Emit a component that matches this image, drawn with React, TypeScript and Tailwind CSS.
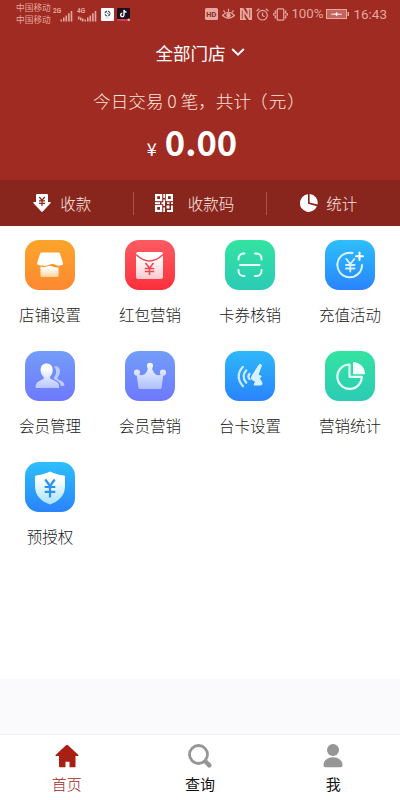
import type { ReactNode } from "react";

type Tile = { label: string; bg: string; icon: ReactNode };

const tiles: Tile[] = [
    { label: "店铺设置", bg: "from-[#fba52a] to-[#fd8830]", icon: <ShopIcon /> },
    { label: "红包营销", bg: "from-[#fc5a62] to-[#fb2d3a]", icon: <RedPacketIcon /> },
    { label: "卡券核销", bg: "from-[#34e3a0] to-[#2ccbb5]", icon: <ScanIcon /> },
    { label: "充值活动", bg: "from-[#2fbffb] to-[#2b83fc]", icon: <RechargeIcon /> },
    { label: "会员管理", bg: "from-[#739df8] to-[#6e78fd]", icon: <MembersIcon /> },
    { label: "会员营销", bg: "from-[#739df8] to-[#6e78fd]", icon: <CrownIcon /> },
    { label: "台卡设置", bg: "from-[#2fb8fb] to-[#2b83fc]", icon: <VoiceIcon /> },
    { label: "营销统计", bg: "from-[#34e3a0] to-[#2ccbb5]", icon: <StatsIcon /> },
    { label: "预授权", bg: "from-[#2fbffb] to-[#2b83fc]", icon: <ShieldIcon /> },
];

function Fade({ id, to }: { id: string; to: string }) {
    return (
        <defs>
            <linearGradient id={id} x1="0" y1="0" x2="0" y2="1">
                <stop offset="0.2" stopColor="#fff" />
                <stop offset="1" stopColor={to} />
            </linearGradient>
        </defs>
    );
}

function ShopIcon() {
    return (
        <svg viewBox="0 0 50 50" className="size-full">
            <Fade id="shop" to="#ffd39a" />
            <path fill="url(#shop)" d="M15.5 26.500q3 1.300 6 .1 3.500-1.500 6.500.1 3 1.500 5.500.3v8.700q0 1.300-1.300 1.300H16.800q-1.300 0-1.300-1.300z" />
            <path fill="#fff" d="M16.5 12.5h17q1 0 1.5 1l3 9.5q.4 2-1.5 2.200-3 1-5.500-.3-3.500-1.800-7.500.2-3.200 1.400-6 .3-2.700.4-4.500-.6-1.200-.7-.8-2l2.900-9.300q.4-1 1.400-1z" />
        </svg>
    );
}

function RedPacketIcon() {
    return (
        <svg viewBox="0 0 50 50" className="size-full">
            <Fade id="packet" to="#fbc9cf" />
            <rect x="11" y="12" width="27" height="27" rx="2" fill="url(#packet)" />
            <path d="M11 14.5q13.5 13 27 0" fill="none" stroke="#fb4a54" strokeWidth="1.5" />
            <path d="M20.5 23l4 5.300 4-5.300M24.5 28.300V35M19.800 28.500h9.400M19.800 31.500h9.400" fill="none" stroke="#f04450" strokeWidth="1.5" />
        </svg>
    );
}

function ScanIcon() {
    return (
        <svg viewBox="0 0 50 50" className="size-full" fill="none" stroke="#eafff8" strokeWidth="2" strokeLinecap="round">
            <path d="M13.5 19.500v-1a5 5 0 0 1 5-5h1M30 13.5h1.500a5 5 0 0 1 5 5v1M13.5 30v1a5 5 0 0 0 5 5h1M30 36h1.500a5 5 0 0 0 5-5v-1M15 25h19.500" />
        </svg>
    );
}

function RechargeIcon() {
    return (
        <svg viewBox="0 0 50 50" className="size-full" fill="none" stroke="#d8f3ff" strokeWidth="2" strokeLinecap="round">
            <path d="M27.5 13A12.300 12.300 0 1 0 37 25" />
            <path d="M34.5 12.500v7.500M31 16.300h7" stroke="#fff" />
            <path d="M21.300 19l4 5 4-5M25.300 24v7.500M21 25h8.600M21 28.500h8.600" strokeWidth="1.800" />
        </svg>
    );
}

function MembersIcon() {
    return (
        <svg viewBox="0 0 50 50" className="size-full">
            <Fade id="members" to="#b7c6ff" />
            <path fill="#b9ccff" d="M29 15.500c3.800-.8 6.300 1.600 6 5.200-.2 2.300-1 4-2.200 5.200-.6 1.200-.2 1.900.9 2.500l3.800 2c1.400 1.200 1.800 2.300 1.900 3.700 0 .6-.4.9-.9.9H36c-1-3.600-3-5-6.300-6.500-1.200-.7-1.300-1.300-.6-2.200 2.600-3.600 2.800-7.600-.1-10.800z" />
            <path fill="url(#members)" d="M21.5 12.500c3.800 0 6.200 2.700 6.200 6.400 0 2.700-1 5-2.500 6.500-.7 1-.3 2 .8 2.600l4.200 1.900c2.800 1.300 3.900 3 4 5.800 0 .9-.5 1.300-1.300 1.300H11.800c-.9 0-1.300-.5-1.300-1.300.1-2.800 1.400-4.600 4-5.800l3-1.400c1.600-.8 1.700-2 .8-3.100-1.600-1.600-2.700-3.700-2.700-6.500 0-3.800 2.200-6.400 5.900-6.400z" />
        </svg>
    );
}

function CrownIcon() {
    return (
        <svg viewBox="0 0 50 50" className="size-full">
            <defs>
                <linearGradient id="crown" gradientUnits="userSpaceOnUse" x1="0" y1="12" x2="0" y2="38">
                    <stop offset="0" stopColor="#f4f8ff" />
                    <stop offset="1" stopColor="#adbfff" />
                </linearGradient>
            </defs>
            <g fill="url(#crown)">
                <path d="M11.5 22.500Q16 25.500 19.500 23.300 22.500 21.300 23.200 15H26.800Q27.500 21.300 30.500 23.300 34 25.500 38.500 22.500L36.600 36.500Q36.400 38 35 38H15Q13.600 38 13.400 36.500z" />
                <circle cx="25" cy="14.800" r="3.100" />
                <circle cx="12" cy="21.500" r="3.100" />
                <circle cx="38" cy="21.500" r="3.100" />
            </g>
        </svg>
    );
}

function VoiceIcon() {
    return (
        <svg viewBox="0 0 50 50" className="size-full">
            <g fill="none" stroke="#c9ecff" strokeWidth="2.200" strokeLinecap="round">
                <path d="M18 15.800q-8.600 9.500 0 19.400" />
                <path d="M21.300 19.300q-5.400 6.200 0 12.400" />
                <path d="M24.600 22.800q-2.600 2.700 0 5.400" />
            </g>
            <path fill="#d6f2ff" stroke="#d6f2ff" strokeLinejoin="round" strokeWidth="1" d="M34 14Q35.500 12.500 36.500 14.200L33 24 36.300 25.300 34.500 27.500 37 32Q37.500 34 35.500 34H29L30.500 30.500 27 28.500Q25.800 27 27 25z" />
        </svg>
    );
}

function StatsIcon() {
    return (
        <svg viewBox="0 0 50 50" className="size-full">
            <path d="M24.500 13.500a12.200 12.200 0 1 0 12.300 12.300H24.500z" fill="none" stroke="#e5fff6" strokeWidth="2.200" strokeLinejoin="round" />
            <path d="M28.500 11.500q10 .8 11.200 11.300H28.500z" fill="#f2fffb" stroke="#f2fffb" strokeWidth="1" strokeLinejoin="round" />
        </svg>
    );
}

function ShieldIcon() {
    return (
        <svg viewBox="0 0 50 50" className="size-full">
            <Fade id="shield" to="#a9e2ff" />
            <path fill="url(#shield)" d="M25 9.500l2.800 1.300q5 2.300 11 2.700 1.200.1 1.200 1.300V24c0 9-5.500 15-15 18.500C15.500 39 10 33 10 24v-9.200q0-1.200 1.200-1.300 6-.4 11-2.700z" />
            <path d="M20.300 17.500l4.700 6.500 4.700-6.500M25 24v11.500M19.700 25h10.600M19.700 29.800h10.600" fill="none" stroke="#2b93ef" strokeWidth="2.200" />
        </svg>
    );
}

function Signal({ wide }: { wide?: boolean }) {
    return (
        <svg viewBox="0 0 20 15" className="h-[15px] w-5" fill="#e6a79f">
            <text x="0" y="6" fontSize="6.500" fontWeight="700" fontFamily="Roboto, sans-serif">{wide ? "4G" : "2G"}</text>
            {wide && <path d="M1 9.500h1.500v3H1zM3 10.500h1.500v3H3zM5 11.500h1.500v3H5z" />}
            <path d="M7.500 12.500H9v2H7.500zM10 10.500h1.600v4H10zM12.500 8.500h1.600v6h-1.600zM15.100 6.200h1.600v8.300h-1.600zM17.700 4h1.600v10.500h-1.600z" />
        </svg>
    );
}

function StatusBar() {
    return (
        <div className="flex h-7 items-center justify-between pl-4 pr-[13px] font-normal text-[#e6a79f]">
            <div className="flex items-center">
                <div className="mr-[2px] text-[8.7px] leading-[12px]">
                    <div>中国移动</div>
                    <div>中国移动</div>
                </div>
                <Signal />
                <div className="w-1" />
                <Signal wide />
                <svg viewBox="0 0 13 13" className="ml-1 size-[13px]">
                    <rect width="13" height="13" rx="1" fill="#fff" />
                    <circle cx="6.500" cy="5.500" r="2.500" fill="none" stroke="#4b5563" strokeWidth="1.200" strokeDasharray="3 1" />
                    <path d="M5.500 4.500l2.500 2" stroke="#4b5563" strokeWidth=".8" />
                    <path d="M4 10h5" stroke="#c4c8ce" strokeWidth=".7" />
                </svg>
                <svg viewBox="0 0 13 13" className="ml-[3px] size-[13px]">
                    <rect width="13" height="13" rx="1" fill="#1c0f1e" />
                    <path d="M7 2v5a1.700 1.700 0 1 1-1.700-1.700M7 2q.4 2 2.500 2.200" fill="none" stroke="#fff" strokeWidth="1.400" />
                    <path d="M0 11h13v1a1 1 0 0 1-1 1H1a1 1 0 0 1-1-1z" fill="#d8365a" />
                    <circle cx="11.800" cy="11.800" r="1.200" fill="#f7c4a4" />
                </svg>
            </div>
            <div className="flex items-center font-[Roboto,sans-serif] text-[13.5px]">
                <svg viewBox="0 0 13 12" className="mr-1 h-3 w-[13px]">
                    <rect width="13" height="12" rx="1.500" fill="#e6a79f" />
                    <text x="1.300" y="8.800" fontSize="7.500" fontWeight="700" fill="#8d2a22">HD</text>
                </svg>
                <svg viewBox="0 0 13 12" className="mr-[5px] h-3 w-[13px]" fill="none" stroke="#e6a79f" strokeWidth="1.200">
                    <path d="M.5 7.500Q6.500 1 12.500 7.500 6.500 13 .5 7.500zM6.500 3.500V.8M3 4.500L1.500 2.300M10 4.500l1.500-2.200" />
                    <circle cx="6.500" cy="7.200" r="1.600" fill="#e6a79f" />
                </svg>
                <svg viewBox="0 0 12 12" className="mr-1 size-3" fill="#e6a79f">
                    <path d="M0 0h3.200l4.300 6.800V3.500L5.500 0H12v12H8.800L4.500 5.200v3.300l2 3.500H0z" />
                    <path d="M2.300 2.500v8.200M9.700 1.300v8.200" stroke="#9f2b22" strokeWidth=".8" />
                </svg>
                <svg viewBox="0 0 13 13" className="mr-1 size-[13px]" fill="none" stroke="#e6a79f" strokeWidth="1.200">
                    <circle cx="6.500" cy="7.200" r="4.800" />
                    <path d="M6.500 4.500v3l2 1.200M.6 3L3.300.8M12.400 3L9.700.8" />
                </svg>
                <svg viewBox="0 0 15 13" className="mr-[3px] h-[13px] w-[15px]" fill="none" stroke="#e6a79f" strokeWidth="1.300">
                    <rect x="4.200" y=".8" width="6.600" height="11.400" rx="1" />
                    <path d="M2.300 2.500v3.200M.8 5v2.700M2.300 7.200v3.300M12.700 2.500v3.200M14.200 5v2.700M12.700 7.200v3.300" />
                </svg>
                <span className="w-[31px] whitespace-nowrap text-[13.3px]">100%</span>
                <svg viewBox="0 0 23 10" className="mx-1 h-2.5 w-[23px]">
                    <rect x=".5" y=".5" width="20" height="9" fill="#c2655d" stroke="#e6a79f" />
                    <path d="M21.500 3H23v4h-1.500z" fill="#e6a79f" />
                    <path d="M5 5.200l4.500-.4L11 3.200v1.600l5 .4-5 .4v1.600L9.500 5.600z" fill="#fff" stroke="#fff" strokeWidth=".4" />
                </svg>
                <span className="whitespace-nowrap">16:43</span>
            </div>
        </div>
    );
}

function CollectIcon() {
    return (
        <svg viewBox="0 0 18 18" className="size-[18px]">
            <path fill="#fff" d="M4 0h10q1 0 1 1v7h2q1.200.2.500 1.200l-7.500 8q-1 1-2 0l-7.500-8Q-.2 8.200 1 8h2V1q0-1 1-1z" />
            <path d="M6.300 3L9 6.200 11.700 3M9 6v6M6 6.800h6M6 9.300h6" fill="none" stroke="#8a261d" strokeWidth="1.200" />
        </svg>
    );
}

function QrIcon() {
    return (
        <svg viewBox="0 0 18 18" className="size-[18px]">
            <g fill="none" stroke="#fff" strokeWidth="2.200">
                <rect x="1.100" y="1.100" width="5" height="5" />
                <rect x="11.900" y="1.100" width="5" height="5" />
                <rect x="1.100" y="11.900" width="5" height="5" />
            </g>
            <path fill="#fff" d="M8.300 0H10v4H8.300zM8.300 5.500H10V9H8.300zM0 8.300h5V10H0zM6.500 8.300H10V12H8.300v-2H6.500zM12 8.300h2.500V10H12zM16 8.300h2V10h-2zM8.300 13.500H10V18H8.300zM11.500 11.500h3v3h-3zM16 11.500h2V18h-6v-2h4z" />
        </svg>
    );
}

function PieIcon() {
    return (
        <svg viewBox="0 0 18 18" className="size-[18px]" fill="#fff">
            <path d="M8 .3V9.700l8.900 2.600A8.800 8.800 0 1 1 8 .3z" />
            <path d="M9.600.1A8.700 8.700 0 0 1 17.500 10.600L9.600 8.400z" />
        </svg>
    );
}

export default function App() {
    return (
        <div className="flex h-[800px] w-[400px] flex-col overflow-hidden bg-[#fafafc] font-['Noto_Sans_CJK_SC',sans-serif] font-light">
            {/* Header */}
            <header className="h-[180px] shrink-0 bg-[#9f2b22]">
                <StatusBar />
                <div className="mt-3 flex h-[26px] items-center justify-center text-[17.5px] font-normal leading-[26px] text-white">
                    全部门店
                    <svg viewBox="0 0 14 8" className="-mt-0.5 ml-[5px] h-2 w-3.5" fill="none" stroke="#fff" strokeWidth="2">
                        <path d="M1.200 1L7 6.600 12.800 1" />
                    </svg>
                </div>
                <p className="mt-[22px] flex h-[26px] justify-center whitespace-pre pr-0.5 text-[17.6px] leading-[26px] text-[#fbe4dc]">
                    今日交易 0 笔，共计<span className="-ml-px mr-px">（</span>元<span className="ml-px">）</span>
                </p>
                <div className="mt-[3px] flex h-12 items-baseline justify-center pr-4 text-white">
                    <span className="mr-2 text-[18px] font-normal">¥</span>
                    <span className="text-[34.5px] font-bold leading-[48px]">0.00</span>
                </div>
            </header>

            {/* Quick actions */}
            <div className="grid h-[46px] shrink-0 grid-cols-3 bg-[#88261d] text-[15.5px] text-[#fbe8e3]">
                <div className="flex items-center justify-center gap-[9px] pr-[9px]">
                    <CollectIcon />
                    <span className="pt-0.5">收款</span>
                </div>
                <div className="flex items-center">
                    <div className="h-[23px] w-px bg-[#a9544b]" />
                    <div className="flex flex-1 items-center justify-center gap-[15px] pr-[11px]">
                        <QrIcon />
                        <span className="pt-0.5">收款码</span>
                    </div>
                    <div className="h-[23px] w-px bg-[#a9544b]" />
                </div>
                <div className="flex items-center justify-center gap-2 pr-[9px]">
                    <PieIcon />
                    <span className="pt-0.5">统计</span>
                </div>
            </div>

            {/* Feature grid */}
            <main className="h-[453px] shrink-0 bg-white pt-3.5">
                <div className="grid grid-cols-4">
                    {tiles.map((tile) => (
                        <div key={tile.label} className="flex h-[111px] flex-col items-center">
                            <div className={`size-[50px] rounded-[14px] bg-linear-to-b ${tile.bg}`}>{tile.icon}</div>
                            <span className="mt-3 text-[15.5px] leading-6 text-[#222]">{tile.label}</span>
                        </div>
                    ))}
                </div>
            </main>

            {/* Tab bar */}
            <nav className="mt-auto grid h-[66px] grid-cols-3 border-t border-[#f0f0f2] bg-white text-[15px] text-[#111]">
                <div className="flex flex-col items-center pt-[9px] text-[#a3241b]">
                    <svg viewBox="0 0 24 24" className="size-6" fill="#a81f14">
                        <path d="M12 .8q.5 0 1 .4l10.200 9.500q.8 1.300-.7 1.300H20.500v10.500q0 .8-.8.8H14.500v-5.500h-4v5.500H4.800q-.8 0-.8-.8V12H1.300q-1.300-.1-.5-1.300L11 1.200q.5-.4 1-.4z" />
                    </svg>
                    <span className="mt-[5px] leading-[22px]">首页</span>
                </div>
                <div className="flex flex-col items-center pt-[9px]">
                    <svg viewBox="0 0 24 24" className="size-6" fill="none" stroke="#969696">
                        <circle cx="10.500" cy="10.500" r="9" strokeWidth="2.800" />
                        <path d="M18 18l3.300 3.300" strokeWidth="4.500" strokeLinecap="round" />
                    </svg>
                    <span className="mt-[5px] font-normal leading-[22px]">查询</span>
                </div>
                <div className="flex flex-col items-center pt-[9px]">
                    <svg viewBox="0 0 24 24" className="size-6" fill="#969696">
                        <circle cx="12" cy="6" r="6" />
                        <path d="M12 13.300c6 0 9.500 3.700 9.500 8 0 1.200-.7 1.900-2 1.900h-15c-1.300 0-2-.7-2-1.900 0-4.300 3.500-8 9.500-8z" />
                    </svg>
                    <span className="mt-[5px] font-normal leading-[22px]">我</span>
                </div>
            </nav>
        </div>
    );
}
